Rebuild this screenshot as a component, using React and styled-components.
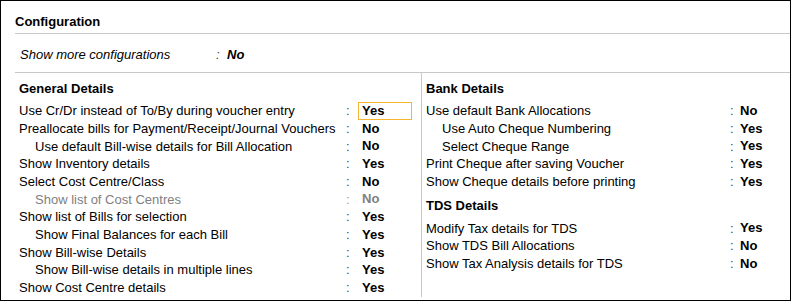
import React from "react";
import styled, { createGlobalStyle } from "styled-components";

const GlobalStyle = createGlobalStyle`
  body {
    margin: 0;
    background: #fff;
    font-family: "Liberation Sans", Arial, sans-serif;
    font-size: 13px;
    color: #000;
  }
`;

const Frame = styled.div`
  width: 791px;
  height: 301px;
  box-sizing: border-box;
  border: 1px solid #000;
  padding: 0 0 3px 14px;
  display: flex;
  flex-direction: column;
`;

const Title = styled.h1`
  margin: 0;
  padding: 12px 0 2px;
  font-size: 13px;
  font-weight: bold;
  line-height: 18px;
  border-bottom: 1px solid #c8c8c8;
`;

const MoreRow = styled.div`
  display: flex;
  padding: 12px 0 8px 5px;
  line-height: 18px;
  font-style: italic;
  border-bottom: 1px solid #c8c8c8;
`;

const MoreLabel = styled.span`
  width: 196px;
`;

const MoreColon = styled.span`
  width: 11px;
  color: #444;
`;

const MoreValue = styled.span`
  font-weight: bold;
`;

const Columns = styled.div`
  flex: 1;
  display: grid;
  grid-template-columns: 406px 1fr;
`;

const Column = styled.div`
  padding: 7px 0 0 4px;
  border-left: ${(p) => (p.$divided ? "1px solid #c8c8c8" : "none")};
`;

const SectionTitle = styled.h2`
  margin: ${(p) => (p.$spaced ? "7px" : "0")} 0 4px;
  font-size: 13px;
  font-weight: bold;
  line-height: 18px;
`;

const Row = styled.div`
  display: grid;
  grid-template-columns: ${(p) => p.$labelW}px ${(p) => p.$colonW}px auto;
  align-items: center;
  height: 17.7px;
  line-height: 17.7px;
  color: ${(p) => (p.$muted ? "#808080" : "#000")};
  white-space: nowrap;
`;

const Label = styled.span`
  padding-left: ${(p) => (p.$indent ? 16 : 0)}px;
`;

const Colon = styled.span`
  color: ${(p) => (p.$muted ? "#9a9a9a" : "#444")};
`;

const Value = styled.span`
  display: inline-block;
  box-sizing: border-box;
  width: 54px;
  height: 18px;
  line-height: 16px;
  margin-left: -4px;
  padding-left: 3px;
  font-weight: bold;
  border: 1px solid ${(p) => (p.$focus ? "#f5b533" : "transparent")};
`;

const general = [
  { label: "Use Cr/Dr instead of To/By during voucher entry", value: "Yes", focus: true },
  { label: "Preallocate bills for Payment/Receipt/Journal Vouchers", value: "No" },
  { label: "Use default Bill-wise details for Bill Allocation", value: "No", indent: true },
  { label: "Show Inventory details", value: "Yes" },
  { label: "Select Cost Centre/Class", value: "No" },
  { label: "Show list of Cost Centres", value: "No", indent: true, muted: true },
  { label: "Show list of Bills for selection", value: "Yes" },
  { label: "Show Final Balances for each Bill", value: "Yes", indent: true },
  { label: "Show Bill-wise Details", value: "Yes" },
  { label: "Show Bill-wise details in multiple lines", value: "Yes", indent: true },
  { label: "Show Cost Centre details", value: "Yes" },
];

const bank = [
  { label: "Use default Bank Allocations", value: "No" },
  { label: "Use Auto Cheque Numbering", value: "Yes", indent: true },
  { label: "Select Cheque Range", value: "Yes", indent: true },
  { label: "Print Cheque after saving Voucher", value: "Yes" },
  { label: "Show Cheque details before printing", value: "Yes" },
];

const tds = [
  { label: "Modify Tax details for TDS", value: "Yes" },
  { label: "Show TDS Bill Allocations", value: "No" },
  { label: "Show Tax Analysis details for TDS", value: "No" },
];

function Rows({ items, labelW, colonW }) {
  return items.map((item) => (
    <Row key={item.label} $labelW={labelW} $colonW={colonW} $muted={item.muted}>
      <Label $indent={item.indent}>{item.label}</Label>
      <Colon $muted={item.muted}>:</Colon>
      <span>
        <Value $focus={item.focus}>{item.value}</Value>
      </span>
    </Row>
  ));
}

export default function App() {
  return (
    <>
      <GlobalStyle />
      <Frame>
        <Title>Configuration</Title>
        <MoreRow>
          <MoreLabel>Show more configurations</MoreLabel>
          <MoreColon>:</MoreColon>
          <MoreValue>No</MoreValue>
        </MoreRow>
        <Columns>
          <Column>
            <SectionTitle>General Details</SectionTitle>
            <Rows items={general} labelW={327} colonW={16} />
          </Column>
          <Column $divided>
            <SectionTitle>Bank Details</SectionTitle>
            <Rows items={bank} labelW={304} colonW={10} />
            <SectionTitle $spaced>TDS Details</SectionTitle>
            <Rows items={tds} labelW={304} colonW={10} />
          </Column>
        </Columns>
      </Frame>
    </>
  );
}
